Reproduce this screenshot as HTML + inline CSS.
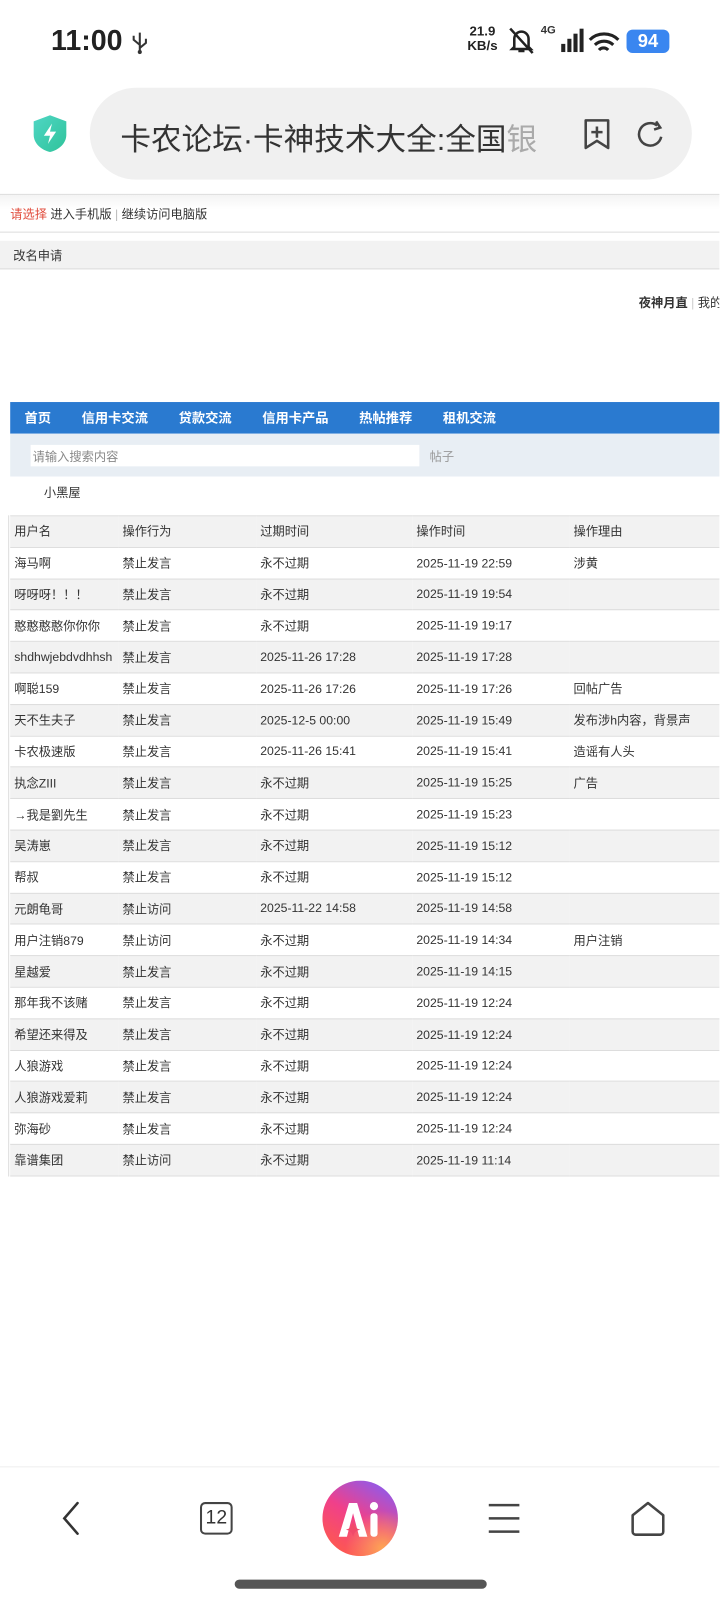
<!DOCTYPE html>
<html><head><meta charset="utf-8"><style>
*{margin:0;padding:0;box-sizing:border-box}
html,body{width:720px;height:1600px;overflow:hidden}
body{background:#fff;font-family:"Liberation Sans","Noto Sans CJK SC",sans-serif;color:#333}
#clip{position:relative;width:720px;height:1600px;overflow:hidden}
#w{position:absolute;left:0;top:0;width:705px;height:1568px;transform:scale(1.0204);transform-origin:0 0;overflow:hidden}
.abs{position:absolute}
table{border-collapse:collapse;position:absolute;left:10px;top:505px;width:712px;font-size:12px;color:#333}
td{height:30.8px;border-top:1px solid #ddd;padding-left:4px;white-space:nowrap}
tr:nth-child(odd) td{background:#f2f2f2}
tr:last-child td{border-bottom:1px solid #ddd}
</style></head><body><div id="clip"><div id="w">
<div class="abs" style="left:50px;top:24px;font-size:28px;font-weight:bold;color:#222">11:00</div>
<svg class="abs" style="left:128px;top:30px" width="18" height="24" viewBox="0 0 18 24"><path d="M9 2 V22 M9 14 L3 9 V5 M9 17 L15 12 V8" fill="none" stroke="#333" stroke-width="2"/><circle cx="9" cy="21" r="2" fill="#333"/></svg>
<div class="abs" style="left:458px;top:24px;font-size:13px;font-weight:bold;line-height:14px;color:#222;text-align:center">21.9<br>KB/s</div>
<svg class="abs" style="left:496px;top:26px" width="30" height="28" viewBox="0 0 30 28"><path d="M8 20 V12 a7 7 0 0 1 14 0 V20 l2 2 H6z M12 24 h6" fill="none" stroke="#222" stroke-width="2.5"/><path d="M4 2 L26 26" stroke="#222" stroke-width="2.5"/></svg>
<div class="abs" style="left:530px;top:24px;font-size:11px;font-weight:bold">4G</div>
<svg class="abs" style="left:548px;top:28px" width="24" height="24"><rect x="2" y="15" width="4" height="8" fill="#222"/><rect x="8" y="10" width="4" height="13" fill="#222"/><rect x="14" y="5" width="4" height="18" fill="#222"/><rect x="20" y="0" width="4" height="23" fill="#222"/></svg>
<svg class="abs" style="left:576px;top:30px" width="32" height="24" viewBox="0 0 32 24"><path d="M2 9 a20 20 0 0 1 28 0 M7 14 a13 13 0 0 1 18 0 M11 19 a6 6 0 0 1 9 0" fill="none" stroke="#222" stroke-width="3"/></svg>
<div class="abs" style="left:614px;top:29px;width:42px;height:23px;background:#3a86f0;border-radius:6px;color:#fff;font-size:18px;font-weight:bold;text-align:center;line-height:23px">94</div>

<svg class="abs" style="left:32px;top:112px" width="34" height="38" viewBox="0 0 34 38"><defs><linearGradient id="g" x1="0" y1="0" x2="1" y2="1"><stop offset="0" stop-color="#4fd6c4"/><stop offset="1" stop-color="#2fc39a"/></linearGradient></defs><path d="M17 1 L33 7 V20 C33 29 25 35 17 37 C9 35 1 29 1 20 V7z" fill="url(#g)"/><path d="M19 9 L11 21 H17 L15 29 L23 17 H17z" fill="#fff"/></svg>
<div class="abs" style="left:88px;top:86px;width:590px;height:90px;background:#f0f0f0;border-radius:45px"></div>
<div class="abs" style="left:118px;top:112px;font-size:30px;color:#333;white-space:nowrap;width:420px;overflow:hidden">卡农论坛·卡神技术大全:全国<span style="color:#aaa">银</span></div>
<svg class="abs" style="left:570px;top:114px" width="32" height="34" viewBox="0 0 32 34"><path d="M4 4 h22 v27 l-11 -7 l-11 7z" fill="none" stroke="#444" stroke-width="2.5" stroke-linejoin="round"/><path d="M15 10 v11 M9.5 15.5 h11" stroke="#444" stroke-width="2.5"/></svg>
<svg class="abs" style="left:622px;top:116px" width="32" height="32" viewBox="0 0 32 32"><path d="M26 18 A11 11 0 1 1 22 7" fill="none" stroke="#444" stroke-width="2.5"/><path d="M21 3 L25 9 L19 11" fill="none" stroke="#444" stroke-width="2.5"/></svg>

<div class="abs" style="left:0;top:190px;width:720px;height:38px;border-top:1px solid #ddd;border-bottom:1px solid #ddd;background:linear-gradient(#f4f4f4,#fff 40%);font-size:12px;padding:10px 10px;color:#333"><span style="color:#e04a3a">请选择</span> 进入手机版 <span style="color:#bbb">|</span> 继续访问电脑版</div>
<div class="abs" style="left:0;top:236px;width:720px;height:28px;background:#f2f2f2;border-bottom:1px solid #ddd;font-size:12px;padding:6px 13px">改名申请</div>
<div class="abs" style="left:626px;top:288px;font-size:12px;font-weight:bold;color:#333;white-space:nowrap">夜神月直<span style="color:#ccc;font-weight:normal"> | </span><span style="font-weight:normal">我的</span></div>

<div class="abs" style="left:10px;top:394px;width:710px;height:31px;background:#2a7ad0;color:#fff;font-size:13px;font-weight:bold;line-height:31px;white-space:nowrap">
<span style="position:absolute;left:14px">首页</span><span style="position:absolute;left:70px">信用卡交流</span><span style="position:absolute;left:165px">贷款交流</span><span style="position:absolute;left:247px">信用卡产品</span><span style="position:absolute;left:342px">热帖推荐</span><span style="position:absolute;left:424px">租机交流</span></div>
<div class="abs" style="left:10px;top:425px;width:710px;height:42px;background:#e8eef4"></div>
<div class="abs" style="left:30px;top:436px;width:381px;height:21px;background:#fff;font-size:12px;color:#888;padding:3px 2px">请输入搜索内容</div>
<div class="abs" style="left:421px;top:439px;font-size:12px;color:#999">帖子</div>
<div class="abs" style="left:43px;top:474px;font-size:12px;color:#333">小黑屋</div>

<table>
<colgroup><col style="width:106px"><col style="width:135px"><col style="width:153px"><col style="width:154px"><col></colgroup>
<tr><td>用户名</td><td>操作行为</td><td>过期时间</td><td>操作时间</td><td>操作理由</td></tr>
<tr><td>海马啊</td><td>禁止发言</td><td>永不过期</td><td>2025-11-19 22:59</td><td>涉黄</td></tr>
<tr><td>呀呀呀！！！</td><td>禁止发言</td><td>永不过期</td><td>2025-11-19 19:54</td><td></td></tr>
<tr><td>憨憨憨憨你你你</td><td>禁止发言</td><td>永不过期</td><td>2025-11-19 19:17</td><td></td></tr>
<tr><td>shdhwjebdvdhhsh</td><td>禁止发言</td><td>2025-11-26 17:28</td><td>2025-11-19 17:28</td><td></td></tr>
<tr><td>啊聪159</td><td>禁止发言</td><td>2025-11-26 17:26</td><td>2025-11-19 17:26</td><td>回帖广告</td></tr>
<tr><td>天不生夫子</td><td>禁止发言</td><td>2025-12-5 00:00</td><td>2025-11-19 15:49</td><td>发布涉h内容，背景声</td></tr>
<tr><td>卡农极速版</td><td>禁止发言</td><td>2025-11-26 15:41</td><td>2025-11-19 15:41</td><td>造谣有人头</td></tr>
<tr><td>执念ZIII</td><td>禁止发言</td><td>永不过期</td><td>2025-11-19 15:25</td><td>广告</td></tr>
<tr><td>→我是劉先生</td><td>禁止发言</td><td>永不过期</td><td>2025-11-19 15:23</td><td></td></tr>
<tr><td>吴涛崽</td><td>禁止发言</td><td>永不过期</td><td>2025-11-19 15:12</td><td></td></tr>
<tr><td>帮叔</td><td>禁止发言</td><td>永不过期</td><td>2025-11-19 15:12</td><td></td></tr>
<tr><td>元朗龟哥</td><td>禁止访问</td><td>2025-11-22 14:58</td><td>2025-11-19 14:58</td><td></td></tr>
<tr><td>用户注销879</td><td>禁止访问</td><td>永不过期</td><td>2025-11-19 14:34</td><td>用户注销</td></tr>
<tr><td>星越爱</td><td>禁止发言</td><td>永不过期</td><td>2025-11-19 14:15</td><td></td></tr>
<tr><td>那年我不该赌</td><td>禁止发言</td><td>永不过期</td><td>2025-11-19 12:24</td><td></td></tr>
<tr><td>希望还来得及</td><td>禁止发言</td><td>永不过期</td><td>2025-11-19 12:24</td><td></td></tr>
<tr><td>人狼游戏</td><td>禁止发言</td><td>永不过期</td><td>2025-11-19 12:24</td><td></td></tr>
<tr><td>人狼游戏爱莉</td><td>禁止发言</td><td>永不过期</td><td>2025-11-19 12:24</td><td></td></tr>
<tr><td>弥海砂</td><td>禁止发言</td><td>永不过期</td><td>2025-11-19 12:24</td><td></td></tr>
<tr><td>靠谱集团</td><td>禁止访问</td><td>永不过期</td><td>2025-11-19 11:14</td><td></td></tr>
</table>
<div class="abs" style="left:8px;top:505px;width:1px;height:648px;background:#ddd"></div>

<div class="abs" style="left:0;top:1437px;width:720px;height:1px;background:#eee"></div>
<svg class="abs" style="left:58px;top:1470px" width="24" height="36"><path d="M18 3 L5 18 L18 33" fill="none" stroke="#333" stroke-width="2.5" stroke-linecap="round"/></svg>
<div class="abs" style="left:196px;top:1472px;width:32px;height:32px;border:2.5px solid #444;border-radius:5px;font-size:19px;text-align:center;line-height:27px;color:#333">12</div>
<svg class="abs" style="left:316px;top:1451px" width="74" height="74" viewBox="0 0 74 74"><defs><linearGradient id="a" x1="0.2" y1="1" x2="0.8" y2="0"><stop offset="0" stop-color="#ff5a4a"/><stop offset="0.5" stop-color="#f0408a"/><stop offset="1" stop-color="#8a5cf0"/></linearGradient><radialGradient id="b" cx="0.8" cy="0.9" r="0.5"><stop offset="0" stop-color="#ffb050" stop-opacity="0.9"/><stop offset="1" stop-color="#ffb050" stop-opacity="0"/></radialGradient></defs><circle cx="37" cy="37" r="37" fill="url(#a)"/><circle cx="37" cy="37" r="37" fill="url(#b)"/><path d="M16 55 L26 22 h8 L44 55 h-8 L30 32 L24 55z" fill="#fff"/><path d="M30 40 Q31 47 37 48 Q31 49 30 55 Q29 49 23 48 Q29 47 30 40z" fill="#f04a6a"/><rect x="47" y="32" width="7" height="23" rx="3" fill="#fff"/><circle cx="50.5" cy="25" r="4" fill="#fff"/></svg>
<svg class="abs" style="left:476px;top:1472px" width="36" height="34"><path d="M3 3 H33 M3 16 H33 M3 29 H33" stroke="#444" stroke-width="2.5"/></svg>
<svg class="abs" style="left:616px;top:1470px" width="38" height="38" viewBox="0 0 38 38"><path d="M4 15 L19 3 L34 15 V31 a3 3 0 0 1 -3 3 H7 a3 3 0 0 1 -3 -3z" fill="none" stroke="#444" stroke-width="2.5" stroke-linejoin="round"/></svg>
<div class="abs" style="left:230px;top:1548px;width:247px;height:9px;border-radius:5px;background:#555"></div>
</div></div></body></html>
